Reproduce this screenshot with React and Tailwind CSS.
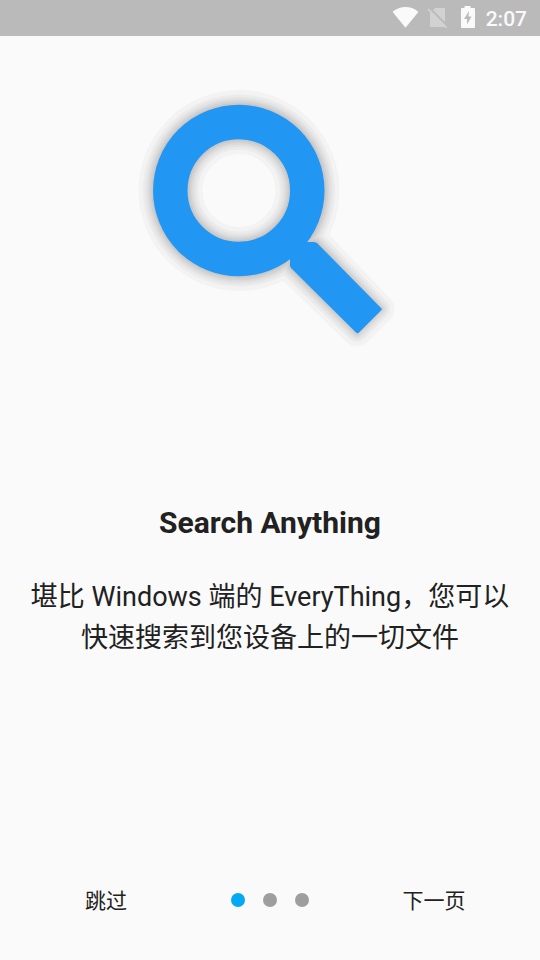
import React, { useState } from 'react';

const PAGES = ['search', 'filter', 'open'];

// Shadow bands around the magnifier, widest first
const SHADOW_BANDS = [
  { width: 29, color: '#f3f3f3' },
  { width: 20, color: '#ebebeb' },
  { width: 15, color: '#e4e4e4' },
  { width: 11, color: '#dcdcdc' },
  { width: 7, color: '#d2d2d2' },
  { width: 3, color: '#c8c8c8' },
];

const HANDLE_PATH = 'M164 170H188L191 171L255 236Q256.5 237 255 238.5L233 260.5Q231.5 262 230 260.5L165 196L164 194Z';

const StatusBar = () => (
  <header className="flex h-9 items-center justify-end bg-[#bababa] pr-[13px] text-[#fafafa]">
    <svg className="mr-2 h-6 w-7" viewBox="0 0 28 24" fill="currentColor" aria-hidden="true">
      <path d="M2.5 5.8C10-.6 21-.6 28.5 5.8L15.5 21.8Z" />
    </svg>
    <svg className="mr-1 h-6 w-6" viewBox="0 0 24 24" aria-hidden="true">
      <path d="M4 7L9 2H18Q19 2 19 3V20Q19 21 18 21H5Q4 21 4 20Z" fill="#d2d2d2" />
      <path d="M3.5 2L22.5 21" stroke="#bababa" strokeWidth="2" />
      <path d="M2 3.2L20.5 21.7" stroke="#d2d2d2" strokeWidth="1.8" />
    </svg>
    <svg className="mr-2 h-6 w-6" viewBox="0 0 24 24" fill="currentColor" aria-hidden="true">
      <path d="M7 2H10.5V0H16.5V2H20Q21 2 21 3V21Q21 22 20 22H8Q7 22 7 21V3Q7 2 8 2Z" />
      <path d="M15 5L10 13H13V18.5L17.5 10.5H14.5Z" fill="#bababa" />
    </svg>
    <span className="pt-0.5 text-[21px] leading-6 font-medium">2:07</span>
  </header>
);

const Magnifier = () => (
  <svg className="h-72 w-72" viewBox="0 0 288 288" aria-hidden="true">
    {SHADOW_BANDS.map((band) => (
      <g key={band.width} fill="none" stroke={band.color} strokeWidth={band.width} strokeLinejoin="round">
        <circle cx="113" cy="118.5" r="86" />
        <circle cx="113" cy="118.5" r="51" />
        <path d="M164 170H190L254 237L231 260L164 195Z" />
      </g>
    ))}
    <circle cx="112.8" cy="118.5" r="68.5" fill="none" stroke="#2296f3" strokeWidth="34.5" />
    <path d={HANDLE_PATH} fill="#2296f3" />
  </svg>
);

const App = () => {
  const [page, setPage] = useState(0);

  return (
    <div className="flex min-h-screen flex-col bg-[#fafafa] font-[Roboto,'Noto_Sans_CJK_SC',sans-serif] text-[#212121]">
      <StatusBar />

      <main className="flex flex-1 flex-col items-center px-6 pt-9">
        <Magnifier />
        <h1 className="mt-[145px] text-[30px] leading-9 font-bold">Search Anything</h1>
        <p className="mt-9 text-center text-[27px] leading-[41px]">
          堪比 Windows 端的 EveryThing，您可以快速搜索到您设备上的一切文件
        </p>
      </main>

      <footer className="grid grid-cols-3 items-center px-6 pb-9 text-[21px] leading-[46px]">
        <button type="button" className="pt-0.5" onClick={() => setPage(PAGES.length - 1)}>
          跳过
        </button>
        <div className="flex justify-center gap-[18px]">
          {PAGES.map((name, i) => (
            <span
              key={name}
              className={i === page ? 'size-[14px] rounded-full bg-[#03a9f4]' : 'size-[14px] rounded-full bg-[#9e9e9e]'}
            />
          ))}
        </div>
        <button type="button" className="pt-0.5" onClick={() => setPage(Math.min(page + 1, PAGES.length - 1))}>
          下一页
        </button>
      </footer>
    </div>
  );
};

export default App;
